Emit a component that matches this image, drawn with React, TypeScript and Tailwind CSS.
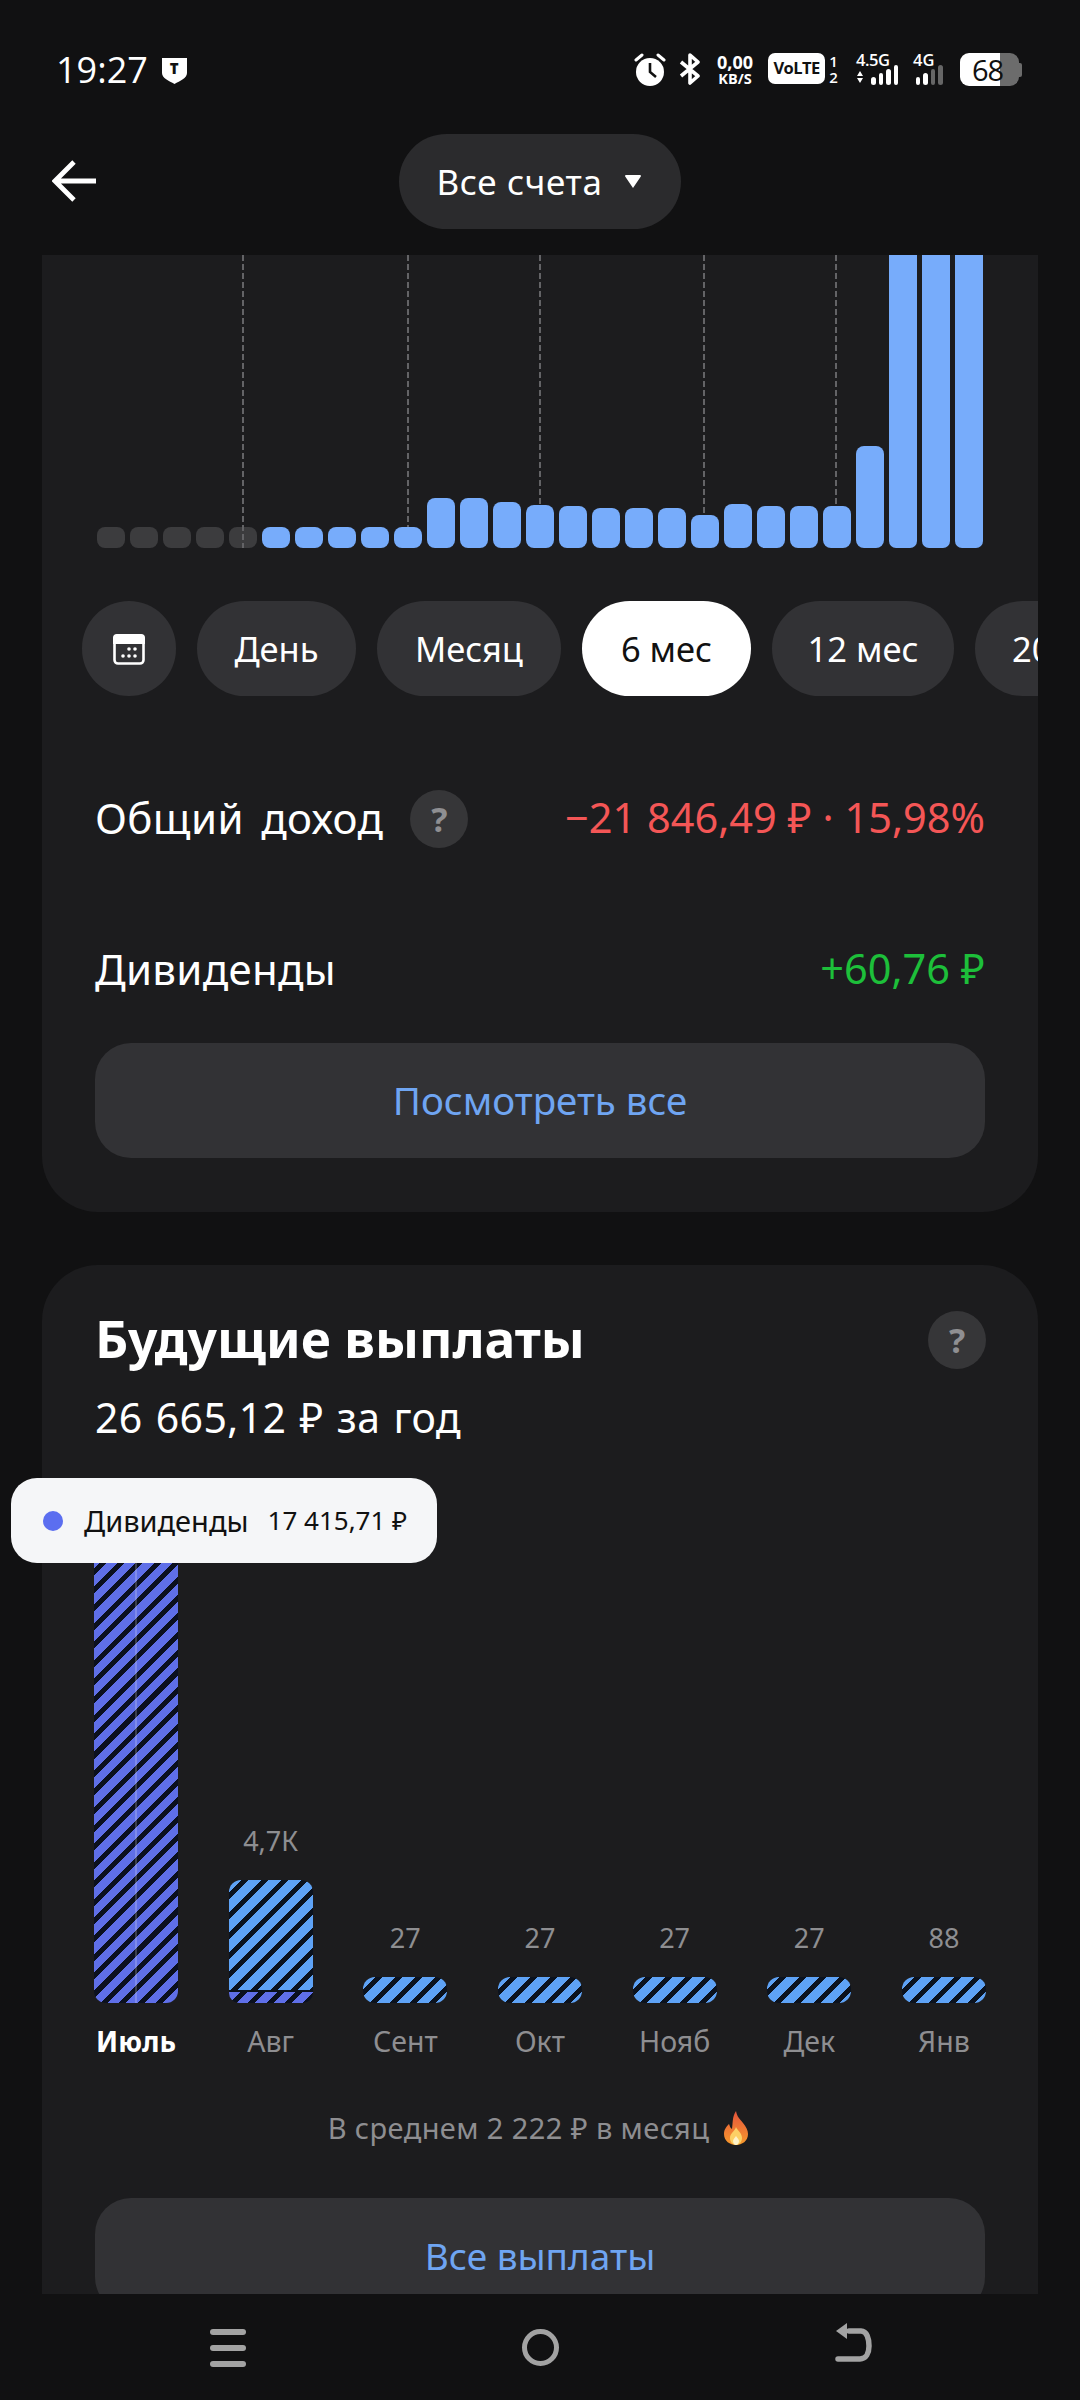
import React from "react";

const font = { fontFamily: '"Noto Sans", sans-serif' };

const smallBars = [
  21, 21, 21, 21, 21, 21, 21, 21, 21, 21, 50, 50, 46, 43, 42, 40, 40, 40, 33, 44, 42, 42, 42, 102, 293, 293, 293,
];

function Alarm() {
  return (
    <svg width="32" height="34" viewBox="0 0 32 34" className="shrink-0">
      <circle cx="16" cy="19" r="14" fill="#fff" />
      <path d="M16 10v9l6 5" stroke="#111" strokeWidth="2.6" fill="none" />
      <path d="M2 7l6-5M30 7l-6-5" stroke="#fff" strokeWidth="3" strokeLinecap="round" />
    </svg>
  );
}

function Bluetooth() {
  return (
    <svg width="22" height="32" viewBox="0 0 22 32" className="shrink-0">
      <path d="M2 9l17 14-8 7V2l8 7L2 23" stroke="#fff" strokeWidth="3.6" fill="none" strokeLinejoin="round" />
    </svg>
  );
}

function Signal({ dim }: { dim: number }) {
  const hs = [8, 12, 16, 20];
  return (
    <div className="flex items-end gap-[3px]">
      {hs.map((h, i) => (
        <div
          key={i}
          className={i >= dim ? "w-[4.5px] rounded-full bg-[#666]" : "w-[4.5px] rounded-full bg-white"}
          style={{ height: h }}
        />
      ))}
    </div>
  );
}

function StatusBar() {
  return (
    <div className="flex h-[134px] shrink-0 items-start justify-between pl-[56px] pr-[58px] pt-[53px] text-white" style={{ fontFamily: '"Open Sans", sans-serif' }}>
      <div className="flex items-center gap-[13px]">
        <span className="text-[36px] leading-[34px] font-medium">19:27</span>
        <div className="relative h-[27px] w-[27px]">
          <svg width="27" height="27" viewBox="0 0 27 27">
            <path d="M1 1h25v15c0 5-7 8-12.500 11C8 24 1 21 1 16z" fill="#fff" />
          </svg>
          <span className="absolute inset-x-0 top-[2px] text-center text-[15px] leading-[18px] font-extrabold text-[#111]">T</span>
        </div>
      </div>
      <div className="flex items-start">
        <Alarm />
        <div className="ml-[13px]"><Bluetooth /></div>
        <div className="ml-[13px] flex w-[42px] flex-col items-center font-bold">
          <span className="text-[18px] leading-[18px]">0,00</span>
          <span className="mt-[1px] text-[14.500px] leading-[14px]">KB/S</span>
        </div>
        <div className="ml-[12px] flex h-[31px] w-[57px] items-center justify-center rounded-[7px] bg-white text-[16.500px] font-bold tracking-[-0.6px] text-[#111]">VoLTE</div>
        <div className="ml-[4px] flex w-[9px] flex-col items-center text-[15px] leading-[16px] font-semibold">
          <span>1</span>
          <span>2</span>
        </div>
        <div className="ml-[18px] flex w-[42px] flex-col">
          <span className="text-[16.500px] leading-[14px] font-semibold tracking-[-0.5px]">4.5G</span>
          <div className="mt-[-2px] flex items-end justify-between">
            <svg width="8" height="16" viewBox="0 0 8 16"><path d="M4 2l3 5H1zM4 14l3-5H1z" fill="#fff" /></svg>
            <Signal dim={4} />
          </div>
        </div>
        <div className="ml-[14px] flex w-[34px] flex-col">
          <span className="pl-[1px] text-[16.500px] leading-[14px] font-semibold">4G</span>
          <div className="mt-[-2px] flex justify-center"><Signal dim={2} /></div>
        </div>
        <div className="relative ml-[14px] flex h-[33px] w-[62px]">
          <div className="h-full w-[40px] rounded-l-[9px] bg-white" />
          <div className="h-full w-[19px] rounded-r-[9px] bg-[#6c6c6c]" />
          <div className="my-auto h-[14px] w-[3px] rounded-r-[2px] bg-[#6c6c6c]" />
          <span className="absolute left-[12px] top-[1px] text-[29px] leading-[31px] font-normal tracking-[-1px] text-[#111]">68</span>
        </div>
      </div>
    </div>
  );
}

function Header() {
  return (
    <div className="relative flex h-[95px] shrink-0 items-center justify-center">
      <svg width="46" height="44" viewBox="0 0 46 44" className="absolute left-[52px] top-[25px]">
        <path d="M44 22H4M22 3L3 22l19 19" stroke="#fff" strokeWidth="4.800" fill="none" />
      </svg>
      <div className="flex h-[95px] w-[282px] items-center justify-center gap-[21px] rounded-full bg-[#2b2b2d] text-[35px] tracking-[0.6px] text-white">
        <span className="leading-none">Все счета</span>
        <svg width="20" height="15" viewBox="0 0 20 15"><path d="M3 1h14a1 1 0 0 1 .800 1.600L10 14 2.200 2.600A1 1 0 0 1 3 1z" fill="#fff" /></svg>
      </div>
    </div>
  );
}

function Pill({ w, children, active }: { w: string; children: React.ReactNode; active?: boolean }) {
  return (
    <div
      className={`flex h-[95px] shrink-0 items-center justify-center rounded-full text-[34.500px] ${w} ${
        active ? "bg-white text-[#111]" : "bg-[#323235] text-white"
      }`}
    >
      {children}
    </div>
  );
}

const DASH = "absolute left-0 top-0 w-[2px] bg-[repeating-linear-gradient(180deg,#636366_0px,#636366_6px,transparent_6px,transparent_9px)]";

function TopChart() {
  return (
    <div className="relative mx-[55px] flex h-[293px] items-end justify-between">
      {smallBars.map((h, i) => (
        <div
          key={i}
          className={i < 5 ? "w-[28px] rounded-[8px] bg-[#3c3c3e]" : i >= 24 ? "w-[28px] rounded-b-[7px] bg-[#77acfb]" : "w-[28px] rounded-[8px] bg-[#77acfb]"}
          style={{ height: h }}
        />
      ))}
      <div className={`${DASH} ml-[145px] h-[293px]`} />
      <div className={`${DASH} ml-[310px] h-[272px]`} />
      <div className={`${DASH} ml-[442px] h-[249px]`} />
      <div className={`${DASH} ml-[606px] h-[259px]`} />
      <div className={`${DASH} ml-[738px] h-[251px]`} />
    </div>
  );
}

function Help({ className }: { className?: string }) {
  return (
    <div className={`flex h-[58px] w-[58px] shrink-0 items-center justify-center rounded-full bg-[#363638] text-[34px] font-bold text-[#8f8f92] ${className ?? ""}`}>
      ?
    </div>
  );
}

function Card1() {
  return (
    <div className="mx-[42px] rounded-b-[56px] bg-[#1c1c1e] pb-[54px]">
      <TopChart />
      <div className="mt-[53px] flex gap-[21px] overflow-hidden pl-[40px]">
        <Pill w="w-[94px]">
          <svg width="36" height="36" viewBox="0 0 36 36">
            <path d="M2 7a4 4 0 0 1 4-4h24a4 4 0 0 1 4 4v6H2z" fill="#fff" />
            <rect x="3.500" y="4.500" width="29" height="28" rx="3.500" stroke="#fff" strokeWidth="2.600" fill="none" />
            <g fill="#fff">
              <circle cx="18" cy="18" r="1.800" /><circle cx="24" cy="18" r="1.800" />
              <circle cx="12" cy="25" r="1.800" /><circle cx="18" cy="25" r="1.800" /><circle cx="24" cy="25" r="1.800" />
            </g>
          </svg>
        </Pill>
        <Pill w="w-[159px]">День</Pill>
        <Pill w="w-[184px]">Месяц</Pill>
        <Pill w="w-[169px]" active>6 мес</Pill>
        <Pill w="w-[182px]">12 мес</Pill>
        <Pill w="w-[120px] justify-start pl-[37px]">2024</Pill>
      </div>
      <div className="mx-[53px] mt-[94px] flex h-[58px] items-center justify-between">
        <div className="flex items-center gap-[27px]">
          <span className="mt-[-3px] text-[42px] leading-none tracking-[0.4px] text-white [word-spacing:6px]">Общий доход</span>
          <Help />
        </div>
        <span className="mt-[-3px] text-[41.500px] leading-none text-[#f45656]">−21 846,49 ₽ · 15,98%</span>
      </div>
      <div className="mx-[53px] mt-[93px] flex h-[58px] items-center justify-between">
        <span className="mt-[-3px] text-[42px] leading-none tracking-[0.3px] text-white">Дивиденды</span>
        <span className="mt-[-3px] text-[41.500px] leading-none text-[#1dbf3a]">+60,76 ₽</span>
      </div>
      <div className="mx-[53px] mt-[44px] flex h-[115px] items-center justify-center rounded-[36px] bg-[#323235] text-[38.500px] text-[#6fa5f2]">
        Посмотреть все
      </div>
    </div>
  );
}

const BLUE = "bg-[repeating-linear-gradient(135deg,#5ea2f5_0px,#5ea2f5_9px,#0b121e_9px,#0b121e_14px)]";
const PURPLE = "bg-[repeating-linear-gradient(135deg,#5f6fe8_0px,#5f6fe8_8px,#0b101f_8px,#0b101f_13px)]";

function Col({ value, children }: { value?: string; children: React.ReactNode }) {
  return (
    <div className="flex w-[84px] flex-col items-center">
      {value && <span className="mb-[21px] whitespace-nowrap text-[27px] leading-[36px] text-[#8e8e91]">{value}</span>}
      {children}
    </div>
  );
}

function Flame() {
  return (
    <svg width="32" height="36" viewBox="0 0 32 36" className="ml-[11px] inline-block">
      <defs>
        <linearGradient id="fl" x1="0" y1="0" x2="0" y2="1">
          <stop offset="0" stopColor="#e5533b" />
          <stop offset="1" stopColor="#f79a2d" />
        </linearGradient>
      </defs>
      <path d="M16 1c1 6 4 8 7 12 3 4 5 7 5 11 0 7-6 11-12 11S4 31 4 24c0-5 3-8 5-10 1 2 1 4 3 5 1-6 0-12 4-18z" fill="url(#fl)" />
      <path d="M16 17c1 3 6 6 6 11 0 4-3 7-6 7s-6-3-6-7c0-5 5-7 6-11z" fill="#fdd065" />
      <path d="M16 26c1 2 3 3 3 5s-1.500 4-3 4-3-2-3-4 2-3 3-5z" fill="#fff3c8" />
    </svg>
  );
}

function Card2() {
  const labels = ["Июль", "Авг", "Сент", "Окт", "Нояб", "Дек", "Янв"];
  const vals = ["27", "27", "27", "27", "88"];
  return (
    <div className="relative mx-[42px] mt-[53px] rounded-t-[56px] bg-[#1c1c1e] pt-[45px]">
      <div className="mx-[53px] flex h-[60px] items-center justify-between">
        <span className="mt-[-3px] text-[51.500px] leading-none font-bold text-white">Будущие выплаты</span>
        <Help className="mr-[-1px]" />
      </div>
      <div className="mx-[53px] mt-[22px] h-[50px] text-[41px] leading-[50px] tracking-[0.4px] text-white [word-spacing:2px]">26 665,12 ₽ за год</div>
      <div className="mx-[52px] mt-0 flex h-[561px] items-end justify-between">
        <Col>
          <div className={`relative h-[483px] w-[84px] overflow-hidden rounded-b-[12px] ${PURPLE}`}>
            <div className="absolute inset-y-0 left-[41px] w-[2px] bg-white/20" />
          </div>
        </Col>
        <Col value="4,7К">
          <div className={`h-[110px] w-[84px] rounded-t-[12px] ${BLUE}`} />
          <div className="h-[2px] w-[84px] bg-[#0b121e]" />
          <div className={`h-[11px] w-[84px] rounded-b-[10px] ${PURPLE}`} />
        </Col>
        {vals.map((v, i) => (
          <Col key={i} value={v}>
            <div className={`h-[26px] w-[84px] rounded-[12px] ${BLUE}`} />
          </Col>
        ))}
      </div>
      <div className="mx-[52px] mt-[18px] flex h-[40px] items-center justify-between">
        {labels.map((l, i) => (
          <span
            key={l}
            className={i === 0 ? "w-[84px] text-center text-[28px] font-bold text-white" : "w-[84px] text-center text-[28.500px] text-[#8e8e91]"}
          >
            {l}
          </span>
        ))}
      </div>
      <div className="mt-[47px] flex h-[40px] items-center justify-center text-[29px] tracking-[0.4px] text-[#8e8e91]">
        В среднем 2 222 ₽ в месяц
        <Flame />
      </div>
      <div className="mx-[53px] mt-[50px] flex h-[115px] items-center justify-center rounded-[36px] bg-[#323235] text-[37px] text-[#6fa5f2]">
        Все выплаты
      </div>
    </div>
  );
}

function NavBar() {
  return (
    <div className="flex h-[106px] shrink-0 items-start bg-[#111112] pl-[210px] pt-[35px]">
      <div className="flex h-[38px] w-[36px] flex-col justify-between">
        <div className="h-[6px] rounded-full bg-[#a3a3a3]" />
        <div className="h-[6px] rounded-full bg-[#a3a3a3]" />
        <div className="h-[6px] rounded-full bg-[#a3a3a3]" />
      </div>
      <div className="ml-[276px] h-[37px] w-[37px] rounded-full border-[5px] border-[#a3a3a3]" />
      <svg width="38" height="42" viewBox="0 0 38 42" className="ml-[276px] mt-[-7px]">
        <path d="M14 9h12c6 0 8 8 8 15s-3 13-9 13H3" stroke="#a3a3a3" strokeWidth="5.500" fill="none" strokeLinecap="round" />
        <path d="M12 1v16L1 9z" fill="#a3a3a3" />
      </svg>
    </div>
  );
}

export default function App() {
  return (
    <div className="relative flex h-[2400px] w-[1080px] flex-col overflow-hidden bg-[#111112]" style={font}>
      <StatusBar />
      <Header />
      <div className="mt-[26px] flex-1 overflow-hidden">
        <Card1 />
        <Card2 />
      </div>
      <NavBar />
      <div className="absolute left-[11px] top-[1478px] flex h-[85px] w-[426px] items-center rounded-[26px] bg-[#f5f6f8] pl-[32px] text-[#111]">
        <div className="h-[20px] w-[20px] rounded-full bg-[#5b6ef0]" />
        <span className="ml-[21px] text-[29px]">Дивиденды</span>
        <span className="ml-[19px] text-[26px]">17 415,71 ₽</span>
      </div>
    </div>
  );
}
